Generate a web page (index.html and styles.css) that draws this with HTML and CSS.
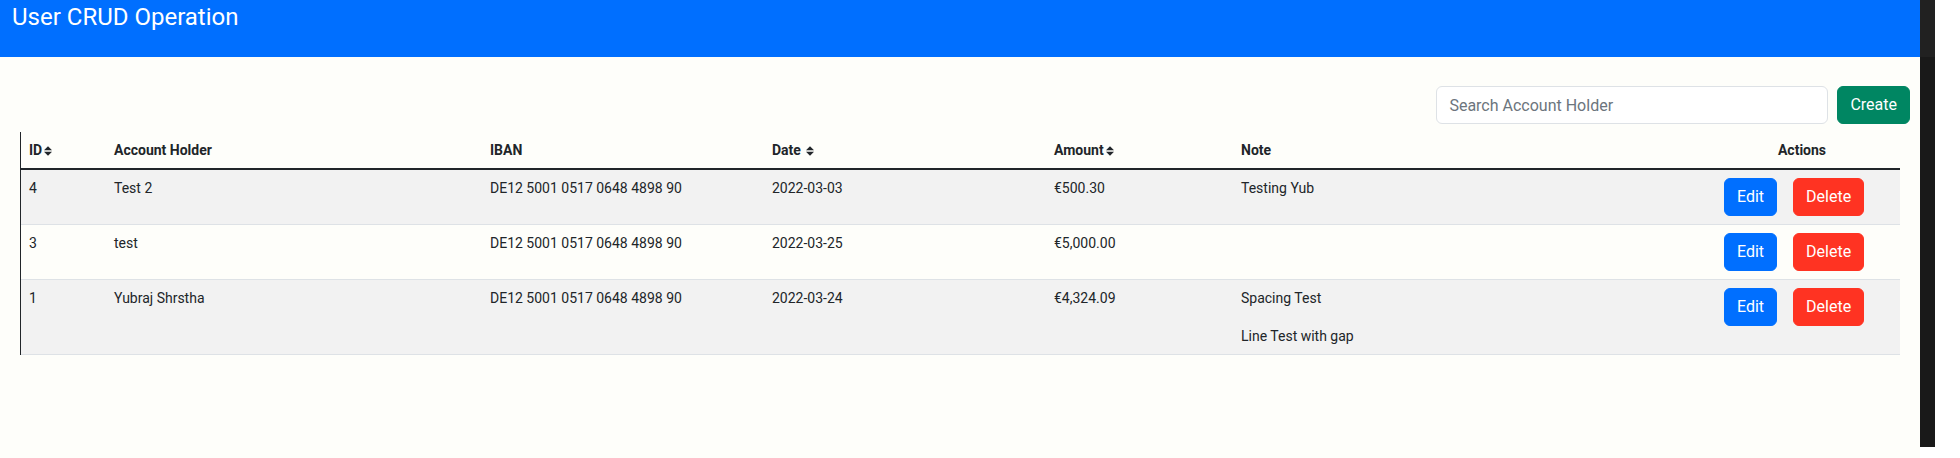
FILE: index.html
```html
<!DOCTYPE html>
<html lang="en">
<head>
<meta charset="utf-8">
<title>User CRUD Operation</title>
<link rel="stylesheet" href="styles.css">
</head>
<body>
<div class="screen">
  <div class="page">
    <header class="topbar">
      <h1 class="title">User CRUD Operation</h1>
    </header>
    <div class="toolbar">
      <input class="search" type="text" placeholder="Search Account Holder">
      <button class="btn btn-create">Create</button>
    </div>
    <div class="table-wrap">
      <table class="grid">
        <colgroup>
          <col class="c-id"><col class="c-holder"><col class="c-iban"><col class="c-date"><col class="c-amount"><col class="c-note"><col class="c-actions">
        </colgroup>
        <thead>
          <tr>
            <th>ID<svg class="sort" viewBox="0 0 8 10"><path d="M0 4.2L4 0.2L8 4.2Z M0 5.8L4 9.8L8 5.8Z"/></svg></th>
            <th>Account Holder</th>
            <th>IBAN</th>
            <th>Date <svg class="sort" viewBox="0 0 8 10"><path d="M0 4.2L4 0.2L8 4.2Z M0 5.8L4 9.8L8 5.8Z"/></svg></th>
            <th>Amount<svg class="sort" viewBox="0 0 8 10"><path d="M0 4.2L4 0.2L8 4.2Z M0 5.8L4 9.8L8 5.8Z"/></svg></th>
            <th>Note</th>
            <th class="th-actions">Actions</th>
          </tr>
        </thead>
        <tbody>
          <tr class="odd">
            <td>4</td>
            <td>Test 2</td>
            <td>DE12 5001 0517 0648 4898 90</td>
            <td>2022-03-03</td>
            <td>€500.30</td>
            <td class="note">Testing Yub</td>
            <td class="actions"><div class="btn-group"><button class="btn btn-edit">Edit</button><button class="btn btn-delete">Delete</button></div></td>
          </tr>
          <tr>
            <td>3</td>
            <td>test</td>
            <td>DE12 5001 0517 0648 4898 90</td>
            <td>2022-03-25</td>
            <td>€5,000.00</td>
            <td class="note"></td>
            <td class="actions"><div class="btn-group"><button class="btn btn-edit">Edit</button><button class="btn btn-delete">Delete</button></div></td>
          </tr>
          <tr class="odd">
            <td>1</td>
            <td>Yubraj Shrstha</td>
            <td>DE12 5001 0517 0648 4898 90</td>
            <td>2022-03-24</td>
            <td>€4,324.09</td>
            <td class="note"><p class="note-line">Spacing Test</p><p class="note-line">Line Test with gap</p></td>
            <td class="actions"><div class="btn-group"><button class="btn btn-edit">Edit</button><button class="btn btn-delete">Delete</button></div></td>
          </tr>
        </tbody>
      </table>
    </div>
  </div>
  <div class="scrollbar"></div>
</div>
</body>
</html>
```

FILE: styles.css
```css
* { box-sizing: border-box; }

html, body {
  margin: 0;
  padding: 0;
  background: #ffffff;
}

body {
  font-family: Roboto, "Liberation Sans", Arial, sans-serif;
  color: #212529;
}

.screen {
  display: flex;
  align-items: flex-start;
  width: 1960px;
  height: 458px;
  overflow: hidden;
}

.page {
  width: 1920px;
  height: 458px;
  background: #fefefa;
  flex: none;
}

.scrollbar {
  width: 15px;
  height: 447px;
  flex: none;
  background: linear-gradient(#212121 0, #212121 57px, #191919 57px, #191919 100%);
}

.topbar {
  height: 57px;
  background: #006fff;
  padding: 3px 12px 0;
}

.title {
  margin: 0;
  font-size: 24px;
  line-height: 28px;
  font-weight: 400;
  color: #ffffff;
}

.toolbar {
  display: flex;
  justify-content: flex-end;
  gap: 9px;
  padding: 29px 10px 0 0;
}

.search {
  width: 392px;
  height: 38px;
  padding: 6px 12px;
  font-family: Roboto, "Liberation Sans", Arial, sans-serif;
  font-size: 16px;
  color: #212529;
  background: #ffffff;
  border: 1px solid #dee2e6;
  border-radius: 6px;
  outline: none;
}

.search::placeholder {
  color: #6c757d;
}

.btn {
  height: 38px;
  padding: 6px 12px;
  font-family: Roboto, "Liberation Sans", Arial, sans-serif;
  font-size: 16px;
  line-height: 24px;
  color: #ffffff;
  border: 1px solid transparent;
  border-radius: 6px;
  cursor: pointer;
}

.btn-create { background: #008662; border-color: #008662; }
.btn-edit { background: #006fff; border-color: #006fff; }
.btn-delete { background: #ff3322; border-color: #ff3322; }

.table-wrap {
  margin: 8px 20px 0;
  border-left: 1px solid #212529;
}

.grid {
  width: 1879px;
  border-collapse: collapse;
  table-layout: fixed;
  font-size: 14px;
  line-height: 20px;
}

.c-id { width: 85px; }
.c-holder { width: 376px; }
.c-iban { width: 282px; }
.c-date { width: 282px; }
.c-amount { width: 187px; }
.c-note { width: 471px; }
.c-actions { width: 196px; }

.grid th {
  text-align: left;
  font-weight: 700;
  padding: 8px;
  vertical-align: middle;
  border-bottom: 2px solid #212529;
  white-space: nowrap;
}

.grid th.th-actions {
  text-align: center;
}

.sort {
  width: 8px;
  height: 10px;
  margin-left: 2px;
  vertical-align: -1px;
  fill: #212529;
}

.grid td {
  padding: 8px;
  vertical-align: top;
  border-bottom: 1px solid #dee2e6;
}

.grid tr.odd td {
  background: #f2f2f2;
}

.note-line {
  margin: 0;
}

.note-line + .note-line {
  margin-top: 18px;
}

.grid td.actions {
  padding-left: 20px;
}

.btn-group {
  display: flex;
  gap: 16px;
}
```
